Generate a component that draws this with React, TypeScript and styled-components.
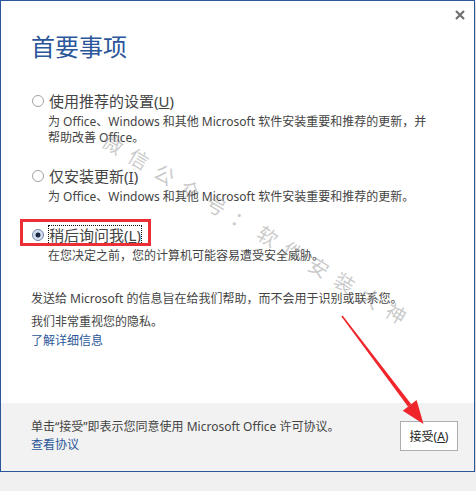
import React from "react";
import styled, { createGlobalStyle } from "styled-components";

const GlobalStyle = createGlobalStyle`
  html, body {
    margin: 0;
    padding: 0;
    background: #f0f0f0;
  }
  body {
    font-family: "Noto Sans", "Noto Sans CJK SC", sans-serif;
    color: #444;
  }
`;

const Window = styled.div`
  position: relative;
  box-sizing: border-box;
  width: 475px;
  height: 472px;
  border: 1px solid #2b579a;
  background: #fff;
  display: flex;
  flex-direction: column;
  box-shadow: 0 5px 8px rgba(0, 0, 0, 0.22);
`;

const CloseButton = styled.div`
  position: absolute;
  top: 9px;
  right: 9px;
  width: 10px;
  height: 10px;
  display: flex;
`;

const Content = styled.div`
  flex: 1;
  padding: 0 30px;
`;

const Title = styled.h1`
  margin: 30px 0 0;
  font-size: 24px;
  line-height: 32px;
  font-weight: normal;
  color: #2b579a;
`;

const OptionList = styled.div`
  margin-top: 28px;
  display: flex;
  flex-direction: column;
  gap: 20px;
`;

const OptionRow = styled.div`
  position: relative;
  display: flex;
  align-items: center;
  height: 20px;
`;

const Radio = styled.span<{ $checked?: boolean }>`
  box-sizing: border-box;
  width: 12px;
  height: 12px;
  margin: 0 4px 0 1px;
  border-radius: 50%;
  border: 1px solid ${(p) => (p.$checked ? "#6d82aa" : "#a3a3a3")};
  background: ${(p) =>
    p.$checked
      ? "radial-gradient(circle, #1c2a44 0 2.2px, #c9d6ea 2.8px, #eef3fa 100%)"
      : "#fff"};
`;

const Label = styled.span<{ $focused?: boolean }>`
  font-size: 15px;
  line-height: 18px;
  color: #444;
  border: 1px dotted ${(p) => (p.$focused ? "#111" : "transparent")};
`;

const Highlight = styled.span`
  position: absolute;
  left: -11px;
  top: -6px;
  width: 131px;
  height: 27px;
  box-sizing: border-box;
  border: 3px solid #ec2f36;
`;

const Desc = styled.div`
  margin: 3px 0 0 17px;
  font-size: 12px;
  line-height: 16px;
  color: #444;
`;

const Paragraph = styled.p`
  margin: 23px 0 0;
  font-size: 12px;
  line-height: 23px;
  color: #444;
`;

const Link = styled.a<{ $pull?: boolean }>`
  display: block;
  margin-top: ${(p) => (p.$pull ? "-2px" : "0")};
  font-size: 12px;
  line-height: 19px;
  color: #2b579a;
  text-decoration: none;
`;

const Footer = styled.div`
  height: 68px;
  box-sizing: border-box;
  background: #f2f2f2;
  padding: 16px 16px 0 30px;
  display: flex;
  align-items: flex-start;
  justify-content: space-between;
`;

const FooterText = styled.div`
  font-size: 12px;
  line-height: 16px;
  color: #444;
`;

const Button = styled.button`
  box-sizing: border-box;
  width: 58px;
  height: 30px;
  margin-top: 2px;
  border: 1px solid #adadad;
  background: #fff;
  font-family: inherit;
  font-size: 12px;
  color: #222;
  padding: 0;
`;

const Watermark = styled.span`
  position: absolute;
  left: 254px;
  top: 227px;
  transform: translate(-50%, -50%) rotate(31deg);
  font-size: 20px;
  font-weight: normal;
  letter-spacing: 10px;
  padding-left: 10px;
  white-space: nowrap;
  color: rgba(150, 150, 150, 0.5);
  pointer-events: none;
`;

const Overlay = styled.svg`
  position: absolute;
  left: -1px;
  top: -1px;
  pointer-events: none;
`;

interface OptionProps {
  label: string;
  mnemonic: string;
  desc: React.ReactNode;
  checked?: boolean;
}

function Option({ label, mnemonic, desc, checked }: OptionProps) {
  return (
    <div>
      <OptionRow>
        <Radio $checked={checked} />
        <Label $focused={checked}>
          {label}(<u>{mnemonic}</u>)
        </Label>
        {checked && <Highlight />}
      </OptionRow>
      <Desc>{desc}</Desc>
    </div>
  );
}

export default function App() {
  return (
    <>
      <GlobalStyle />
      <Window>
        <CloseButton>
          <svg width="10" height="10" viewBox="0 0 10 10">
            <path d="M1 1L9 9M9 1L1 9" stroke="#6f6f6f" strokeWidth="2.2" />
          </svg>
        </CloseButton>
        <Content>
          <Title>首要事项</Title>
          <OptionList>
            <Option
              label="使用推荐的设置"
              mnemonic="U"
              desc={
                <>
                  为 Office、Windows 和其他 Microsoft 软件安装重要和推荐的更新，并
                  <br />
                  帮助改善 Office。
                </>
              }
            />
            <Option
              label="仅安装更新"
              mnemonic="I"
              desc="为 Office、Windows 和其他 Microsoft 软件安装重要和推荐的更新。"
            />
            <Option
              label="稍后询问我"
              mnemonic="L"
              checked
              desc="在您决定之前，您的计算机可能容易遭受安全威胁。"
            />
          </OptionList>
          <Paragraph>
            发送给 Microsoft 的信息旨在给我们帮助，而不会用于识别或联系您。
            <br />
            我们非常重视您的隐私。
          </Paragraph>
          <Link $pull>了解详细信息</Link>
        </Content>
        <Footer>
          <FooterText>
            单击“接受”即表示您同意使用 Microsoft Office 许可协议。
            <Link>查看协议</Link>
          </FooterText>
          <Button>
            接受(<u>A</u>)
          </Button>
        </Footer>
        <Watermark>微信公众号：软件安装大神</Watermark>
        <Overlay width="476" height="491" viewBox="0 0 476 491">
          <polygon
            points="341.4,316.4 342.6,315.6 411.3,404.3 408.1,406.7"
            fill="#f0252b"
          />
          <polygon points="423.5,424 416.6,400 402.8,410.8" fill="#f0252b" />
        </Overlay>
      </Window>
    </>
  );
}
